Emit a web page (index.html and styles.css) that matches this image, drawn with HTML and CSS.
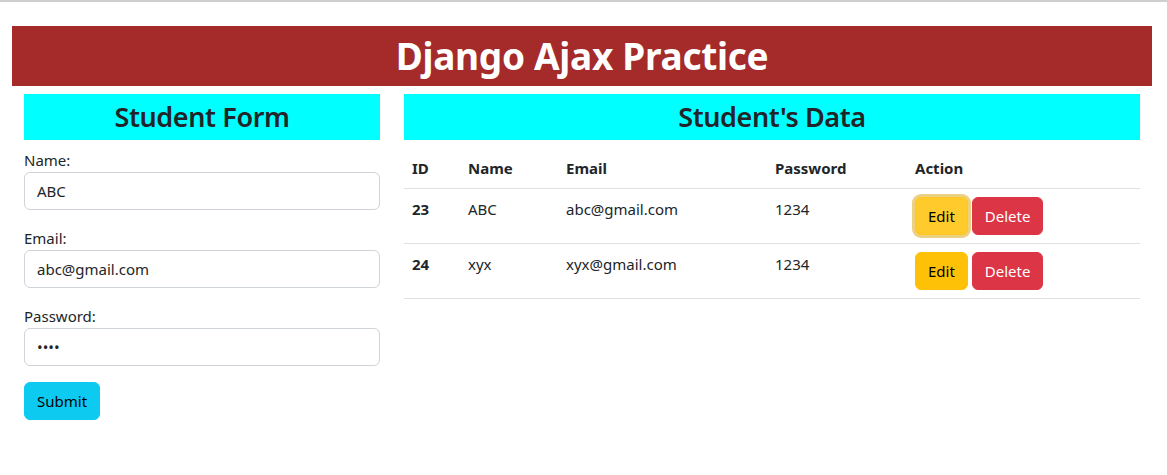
FILE: index.html
```html
<!DOCTYPE html>
<html lang="en">
<head>
<meta charset="utf-8">
<title>Django Ajax Practice</title>
<link rel="stylesheet" href="styles.css">
</head>
<body>
<div class="topline"></div>
<div class="container">
  <h1 class="banner">Django Ajax Practice</h1>
  <div class="row">
    <div class="col-form">
      <h2 class="panel-title">Student Form</h2>
      <form class="student-form">
        <div class="field">
          <label class="field-label" for="name">Name:</label>
          <input class="field-input" id="name" type="text" value="ABC">
        </div>
        <div class="field">
          <label class="field-label" for="email">Email:</label>
          <input class="field-input" id="email" type="email" value="abc@gmail.com">
        </div>
        <div class="field">
          <label class="field-label" for="password">Password:</label>
          <input class="field-input" id="password" type="password" value="1234">
        </div>
        <button class="btn btn-info" type="button">Submit</button>
      </form>
    </div>
    <div class="col-data">
      <h2 class="panel-title">Student's Data</h2>
      <table class="data-table">
        <thead>
          <tr>
            <th class="c-id">ID</th>
            <th class="c-name">Name</th>
            <th class="c-email">Email</th>
            <th class="c-pass">Password</th>
            <th class="c-action">Action</th>
          </tr>
        </thead>
        <tbody>
          <tr>
            <th>23</th>
            <td>ABC</td>
            <td>abc@gmail.com</td>
            <td>1234</td>
            <td><button class="btn btn-warning is-focused" type="button">Edit</button> <button class="btn btn-danger" type="button">Delete</button></td>
          </tr>
          <tr>
            <th>24</th>
            <td>xyx</td>
            <td>xyx@gmail.com</td>
            <td>1234</td>
            <td><button class="btn btn-warning" type="button">Edit</button> <button class="btn btn-danger" type="button">Delete</button></td>
          </tr>
        </tbody>
      </table>
    </div>
  </div>
</div>
</body>
</html>
```

FILE: styles.css
```css
* { box-sizing: border-box; }

html, body {
  margin: 0;
  padding: 0;
  background: #fff;
}

body {
  font-family: "Noto Sans", "Open Sans", sans-serif;
  font-size: 15px;
  line-height: 24px;
  color: #212529;
}

.topline {
  height: 2px;
  background: #cfcfcf;
}

.container {
  width: 1140px;
  margin: 24px 0 0 12px;
}

.banner {
  margin: 0 0 8px;
  height: 60px;
  line-height: 60px;
  background: #a52a2a;
  color: #fff;
  text-align: center;
  font-size: 37px;
  letter-spacing: -0.3px;
  font-weight: 700;
}

.row {
  display: flex;
  gap: 24px;
  padding: 0 12px;
}

.col-form { width: 356px; flex: none; }
.col-data { width: 736px; flex: none; }

.panel-title {
  margin: 0 0 8px;
  height: 46px;
  line-height: 46px;
  background: #00ffff;
  text-align: center;
  font-size: 27px;
  letter-spacing: -0.4px;
  font-weight: 600;
  color: #212529;
}

.field { margin-bottom: 16px; }

.field-label {
  display: block;
  line-height: 24px;
}

.field-input {
  display: block;
  width: 100%;
  height: 38px;
  padding: 6px 12px;
  border: 1px solid #ced4da;
  border-radius: 6px;
  font: inherit;
  color: #212529;
  background: #fff;
}

.btn {
  display: inline-block;
  height: 38px;
  padding: 6px 12px;
  border: 1px solid transparent;
  border-radius: 6px;
  font: inherit;
  line-height: 24px;
  vertical-align: top;
  cursor: pointer;
}

.btn-info { background: #0dcaf0; border-color: #0dcaf0; color: #000; }
.btn-warning { background: #ffc107; border-color: #ffc107; color: #000; }
.btn-warning.is-focused {
  background: #ffca2c;
  border-color: #ffc720;
  box-shadow: 0 0 0 3px rgba(217, 164, 6, 0.5);
}
.btn-danger { background: #dc3545; border-color: #dc3545; color: #fff; }

.data-table {
  width: 100%;
  border-collapse: collapse;
}

.data-table th,
.data-table td {
  padding: 8px;
  text-align: left;
  vertical-align: top;
  border-bottom: 1px solid #dee2e6;
}

.data-table th { font-weight: 700; }

.c-id { width: 56px; }
.c-name { width: 98px; }
.c-email { width: 209px; }
.c-pass { width: 140px; }
```
